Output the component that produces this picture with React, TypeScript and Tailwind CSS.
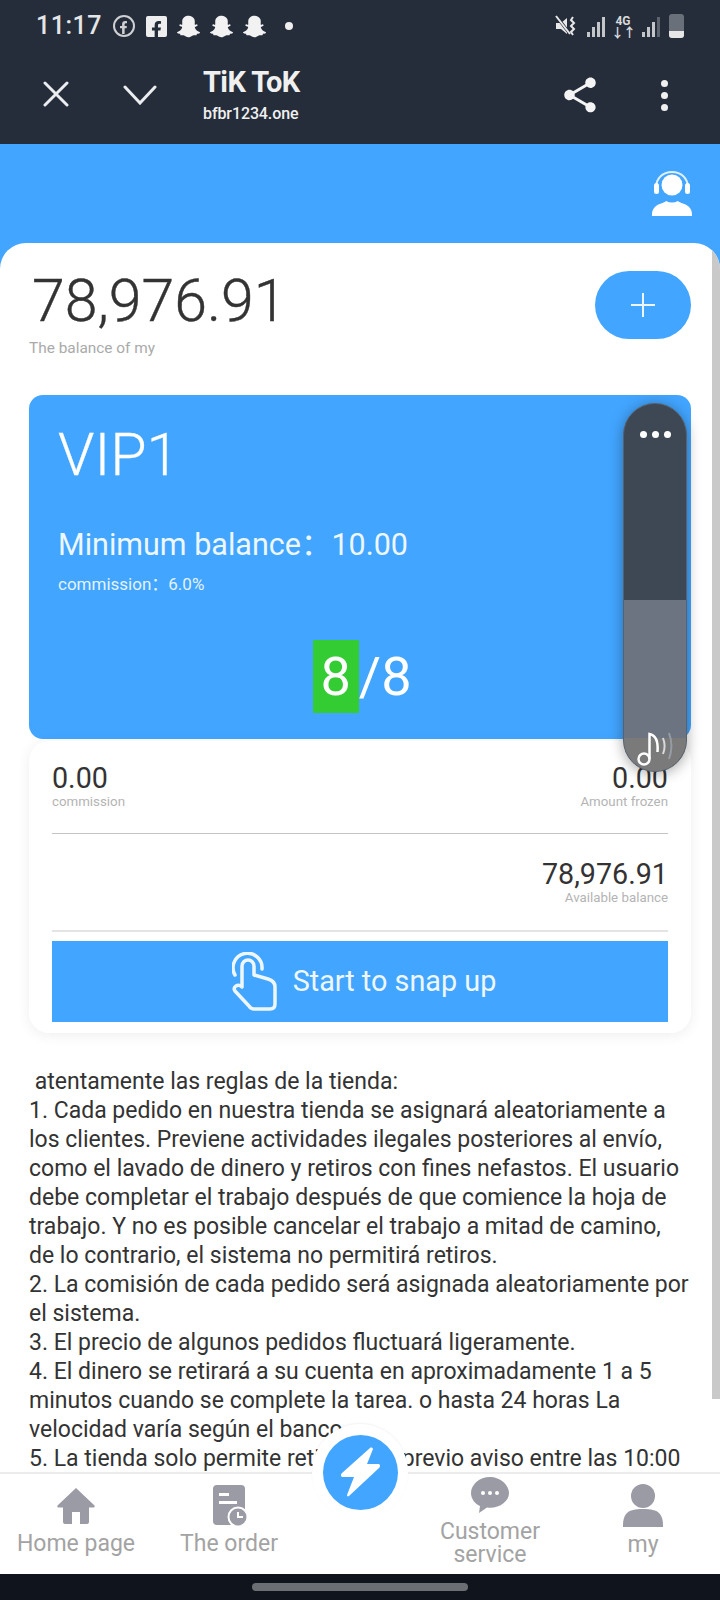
import { FaSnapchatGhost, FaFacebookF } from "react-icons/fa";
import { MdShare } from "react-icons/md";

const rules = [
  "\u00a0atentamente las reglas de la tienda:",
  "1. Cada pedido en nuestra tienda se asignará aleatoriamente a los clientes. Previene actividades ilegales posteriores al envío, como el lavado de dinero y retiros con fines nefastos. El usuario debe completar el trabajo después de que comience la hoja de trabajo. Y no es posible cancelar el trabajo a mitad de camino, de lo contrario, el sistema no permitirá retiros.",
  "2. La comisión de cada pedido será asignada aleatoriamente por el sistema.",
  "3. El precio de algunos pedidos fluctuará ligeramente.",
  "4. El dinero se retirará a su cuenta en aproximadamente 1 a 5 minutos cuando se complete la tarea. o hasta 24 horas La velocidad varía según el banco.",
  "5. La tienda solo permite retiros con previo aviso entre las 10:00",
];

function Signal({ bars }: { bars: number }) {
  const heights = [5, 10, 15, 20];
  return (
    <div className="flex items-end gap-[2px] h-[22px]">
      {heights.map((h, i) => (
        <div
          key={h}
          className={i < bars ? "w-[3px] bg-[#c4c6c9]" : "w-[3px] bg-[#5d6470]"}
          style={{ height: h }}
        />
      ))}
    </div>
  );
}

function StatusBar() {
  return (
    <div className="h-[60px] flex items-start justify-between pt-[13px] pl-[36px] pr-[36px]">
      <div className="flex items-center gap-[10px] h-[26px]">
        <span className="text-[25px] leading-[26px] font-medium text-[#e4e5e7] tracking-[0.5px] mr-[1px]">11:17</span>
        <div className="w-[22px] h-[22px] rounded-full border-2 border-[#cfd0d3] flex items-center justify-center overflow-hidden">
          <FaFacebookF className="text-[#cfd0d3] text-[13px] mt-[2px]" />
        </div>
        <div className="w-[21px] h-[21px] rounded-[2px] bg-[#eeeeee] flex items-end justify-end overflow-hidden pr-[2px] ml-[1px]">
          <FaFacebookF className="text-[#252d3a] text-[17px] -mb-[1px]" />
        </div>
        <FaSnapchatGhost className="text-[#f2f2f2] text-[23px]" />
        <FaSnapchatGhost className="text-[#f2f2f2] text-[23px]" />
        <FaSnapchatGhost className="text-[#f2f2f2] text-[23px]" />
        <div className="w-[8px] h-[8px] rounded-full bg-[#eeeeee] ml-[9px]" />
      </div>
      <div className="flex items-center h-[26px]">
        <svg width="24" height="24" viewBox="0 0 24 24" className="mr-[9px]">
          <path d="M2 9h5l6-5v16l-6-5H2z" fill="#e8e8e8" />
          <path d="M3 3l13 17" stroke="#252d3a" strokeWidth="3" />
          <path d="M2 2l14 18" stroke="#e8e8e8" strokeWidth="2" />
          <path d="M19 3l-2 3 3 3-3 3 3 3-3 3 2 3" stroke="#e8e8e8" strokeWidth="2" fill="none" />
        </svg>
        <Signal bars={4} />
        <div className="flex flex-col items-center ml-[9px] w-[18px] text-[#d8d9db]">
          <span className="text-[12px] leading-[12px] font-bold">4G</span>
          <span className="text-[13px] leading-[11px] font-bold tracking-[-1px]">↓↑</span>
        </div>
        <div className="ml-[10px]">
          <Signal bars={3} />
        </div>
        <div className="ml-[9px] w-[15px] h-[24px] rounded-[3px] bg-[#6a7079] flex items-end overflow-hidden">
          <div className="w-full h-[7px] bg-[#e6e6e6]" />
        </div>
      </div>
    </div>
  );
}

function Toolbar() {
  return (
    <div className="h-[84px] flex items-start">
      <svg width="26" height="26" viewBox="0 0 26 26" className="ml-[43px] mt-[21px]" fill="none" stroke="#ebedef" strokeWidth="3" strokeLinecap="round">
        <path d="M2 2l22 22M24 2L2 24" />
      </svg>
      <svg width="34" height="20" viewBox="0 0 34 20" className="ml-[54px] mt-[25px]" fill="none" stroke="#ebedef" strokeWidth="3" strokeLinecap="round">
        <path d="M2 2l15 16L32 2" />
      </svg>
      <div className="ml-[46px] mt-[4px] text-[#f0f0f0]">
        <div className="text-[29px] leading-[36px] font-bold tracking-[-0.6px]">TiK ToK</div>
        <div className="text-[16px] leading-[20px] mt-[4px] font-medium tracking-[-0.1px]">bfbr1234.one</div>
      </div>
      <div className="flex-1" />
      <MdShare className="text-[#f4f4f4] text-[42px] mt-[14px] mr-[60px]" />
      <div className="flex flex-col gap-[5px] mt-[20px] mr-[52px]">
        <div className="w-[7px] h-[7px] rounded-full bg-[#f0f0f0]" />
        <div className="w-[7px] h-[7px] rounded-full bg-[#f0f0f0]" />
        <div className="w-[7px] h-[7px] rounded-full bg-[#f0f0f0]" />
      </div>
    </div>
  );
}

function SupportIcon() {
  return (
    <svg width="42" height="46" viewBox="0 0 42 46" fill="none">
      <circle cx="21" cy="15" r="10.5" fill="#ffffff" />
      <path d="M5 18C5 8 12 2 21 2s16 6 16 16" stroke="#dff0ff" strokeWidth="2" />
      <rect x="3" y="13" width="5" height="11" rx="2.5" fill="#ffffff" />
      <rect x="34" y="13" width="5" height="11" rx="2.5" fill="#ffffff" />
      <path d="M1 46c0-3 0-7 4-10 4-3 8-3 10-5 4 2 8 2 12 0 2 2 6 2 10 5 4 3 4 7 4 10z" fill="#ffffff" />
    </svg>
  );
}

function TapIcon() {
  return (
    <svg width="46" height="60" viewBox="0 0 46 60" fill="none" stroke="#eef7ff" strokeWidth="3.5" strokeLinejoin="round" strokeLinecap="round">
      <path d="M3 23A14.500 14.500 0 1 1 30 17" />
      <path d="M10 32V14a6 6 0 0 1 12 0V23l14 4q7 2 7 8V52q0 5-5 5H22q-3 0-5-3L3 39q-2-3 1-5q3-2 6 1z" />
    </svg>
  );
}

function Stat({ value, label, right }: { value: string; label: string; right?: boolean }) {
  return (
    <div className={right ? "text-right" : ""}>
      <div className="text-[28.700px] leading-[32px] text-[#333333]">{value}</div>
      <div className="text-[13.300px] leading-[16px] text-[#b4b4b4]">{label}</div>
    </div>
  );
}

function FloatingPill() {
  return (
    <div className="absolute left-[623px] top-[403px] w-[64px] h-[369px] rounded-[32px] overflow-hidden bg-[#3d4854] shadow-[0_2px_14px_rgba(0,0,0,0.35)] border border-[#58626d]">
      <div className="flex justify-center gap-[5px] mt-[27px]">
        <div className="w-[7px] h-[7px] rounded-full bg-white" />
        <div className="w-[7px] h-[7px] rounded-full bg-white" />
        <div className="w-[7px] h-[7px] rounded-full bg-white" />
      </div>
      <div className="absolute left-0 right-0 top-[196px] bottom-0 bg-[#6b7480]">
        <div className="absolute left-0 right-0 bottom-0 h-[33px] bg-[#7a7a7a]" />
        <svg width="40" height="38" viewBox="0 0 40 38" fill="none" stroke="#ffffff" strokeWidth="2.5" className="absolute left-[12px] bottom-[4px]">
          <circle cx="8" cy="30" r="5.5" />
          <path d="M13.5 30V5c5 1 9 6 8 18" />
          <path d="M27 9c2 5 2 11 0 16" stroke="#d7dadd" strokeWidth="2" />
          <path d="M33 4c3 8 3 18 0 26" stroke="#969ca3" strokeWidth="2" />
        </svg>
      </div>
    </div>
  );
}

function NavItem({ icon, label }: { icon: React.ReactNode; label: React.ReactNode }) {
  return (
    <div className="flex flex-col items-center justify-start text-[#a3a3a3] text-[23px] leading-[23px] text-center">
      {icon}
      {label}
    </div>
  );
}

function BottomNav() {
  return (
    <div className="relative h-[102px] bg-white border-t-2 border-[#ececec] grid grid-cols-[152px_154px_108px_152px_154px]">
      <NavItem
        label={<span className="mt-[7px]">Home page</span>}
        icon={
          <svg width="38" height="38" viewBox="0 0 38 38" className="mt-[13px]">
            <path d="M19 1L0.5 18.5c-.5 1 0 2 1 2H6V35a2 2 0 002 2h7V25h8v12h7a2 2 0 002-2V20.500h4.500c1 0 1.500-1 1-2z" fill="#9b9ba5" />
          </svg>
        }
      />
      <NavItem
        label={<span className="mt-[5px]">The order</span>}
        icon={
          <svg width="36" height="42" viewBox="0 0 36 42" className="mt-[11px]">
            <rect x="2" y="0" width="32" height="40" rx="4" fill="#9b9ba5" />
            <rect x="8" y="8" width="10" height="3" fill="#ffffff" />
            <rect x="8" y="16" width="18" height="3" fill="#ffffff" />
            <circle cx="27" cy="32" r="9.500" fill="#9b9ba5" stroke="#ffffff" strokeWidth="2" />
            <path d="M27 27v5h5" stroke="#ffffff" strokeWidth="2" fill="none" />
          </svg>
        }
      />
      <div />
      <NavItem
        label={
          <span className="mt-[7px]">
            Customer
            <br />
            service
          </span>
        }
        icon={
          <svg width="38" height="36" viewBox="0 0 38 36" className="mt-[3px]">
            <path d="M19 0C8.500 0 0 7.500 0 16c0 5.500 3.500 10.500 9 13l-1 7 8-5.500c1 .1 2 .2 3 .2 10.500 0 19-6.800 19-14.700S29.500 0 19 0z" fill="#9b9ba5" />
            <circle cx="12" cy="16" r="2" fill="#ffffff" />
            <circle cx="19" cy="16" r="2" fill="#ffffff" />
            <circle cx="26" cy="16" r="2" fill="#ffffff" />
          </svg>
        }
      />
      <NavItem
        label={<span className="mt-[6px]">my</span>}
        icon={
          <svg width="40" height="43" viewBox="0 0 40 43" className="mt-[10px]">
            <ellipse cx="20" cy="12" rx="12" ry="12" fill="#9b9ba5" />
            <path d="M0 43c0-4 0-10 4-14 3-3 8-4 16-4s13 1 16 4c4 4 4 10 4 14z" fill="#9b9ba5" />
          </svg>
        }
      />
      <div className="absolute left-[312px] -top-[50px] w-[96px] h-[96px] rounded-full bg-white flex items-center justify-center shadow-[0_-1px_2px_rgba(0,0,0,0.05)]">
        <div className="w-[75px] h-[75px] rounded-full bg-[#42a5ff] flex items-center justify-center">
          <svg width="44" height="50" viewBox="0 0 44 50">
            <path d="M32 1L4 26c-2 2-1 4 1 4h11L9 48c0 1 1 2 2 1l30-28c2-2 1-4-1-4H29l6-15c0-1-2-2-3-1z" fill="#ffffff" />
          </svg>
        </div>
      </div>
    </div>
  );
}

export default function App() {
  return (
    <div className="relative w-[720px] h-[1600px] overflow-hidden flex flex-col bg-[#42a5ff] font-['Roboto','Noto_Sans_CJK_SC',sans-serif]">
      <div className="bg-[#252d3a] h-[144px]">
        <StatusBar />
        <Toolbar />
      </div>
      <div className="h-[99px] flex justify-end pt-[26px] pr-[27px]">
        <SupportIcon />
      </div>
      <div className="relative flex-1 min-h-0 bg-white rounded-t-[26px] overflow-hidden">
        <div className="absolute right-0 top-0 w-[8px] h-[1156px] bg-[#c9c9c9]" />
        <div className="flex justify-between items-start pt-[28px] pl-[29px] pr-[29px]">
          <div>
            <div className="text-[59px] leading-[60px] text-[#333333] font-light pl-[3px] [-webkit-text-stroke:0.4px_#333333]">78,976.91</div>
            <div className="text-[15.400px] leading-[18px] text-[#aaaaaa] mt-[8px]">The balance of my</div>
          </div>
          <div className="w-[96px] h-[68px] rounded-full bg-[#42a5ff] flex items-center justify-center">
            <svg width="26" height="26" viewBox="0 0 26 26" stroke="#ffffff" strokeWidth="2" opacity="0.9">
              <path d="M13 1v24M1 13h24" />
            </svg>
          </div>
        </div>
        <div className="mx-[29px] mt-[38px] h-[344px] rounded-[14px] bg-[#42a5ff] text-white px-[29px] pt-[28px]">
          <div className="text-[59px] leading-[64px] font-light [-webkit-text-stroke:0.3px_#ffffff]">VIP1</div>
          <div className="text-[30.500px] leading-[36px] mt-[40px] text-[#eef7ff]">Minimum balance：10.00</div>
          <div className="text-[17px] leading-[20px] mt-[11px] text-[#e4f2ff]">commission：6.0%</div>
          <div className="flex justify-center mt-[46px] pl-[4px] text-[54px] leading-[73px]">
            <span className="bg-[#33cc33] px-[8px]">8</span>
            <span>/8</span>
          </div>
        </div>
        <div className="mx-[29px] mt-[2px] h-[292px] rounded-[20px] bg-white shadow-[0_2px_14px_rgba(0,0,0,0.07)] px-[23px] pt-[21px]">
          <div className="flex justify-between h-[71px]">
            <Stat value="0.00" label="commission" />
            <Stat value="0.00" label="Amount frozen" right />
          </div>
          <div className="h-px bg-[#c4c4c4]" />
          <div className="flex justify-end pt-[24px] h-[96px]">
            <Stat value="78,976.91" label="Available balance" right />
          </div>
          <div className="h-[2px] bg-[#e4e4e4]" />
          <div className="mt-[9px] h-[81px] bg-[#42a5ff] flex items-center justify-center pl-[8px] gap-[15px] text-[#eef7ff] text-[28.800px]">
            <TapIcon />
            Start to snap up
          </div>
        </div>
        <div className="ml-[29px] mr-[30px] mt-[34px] text-[23px] leading-[29px] text-[#333333]">
          {rules.map((line) => (
            <div key={line}>{line}</div>
          ))}
        </div>
      </div>
      <BottomNav />
      <div className="h-[26px] bg-[#10141c] flex justify-center pt-[9px]">
        <div className="w-[216px] h-[8px] rounded-full bg-[#6b6e73]" />
      </div>
      <FloatingPill />
    </div>
  );
}
